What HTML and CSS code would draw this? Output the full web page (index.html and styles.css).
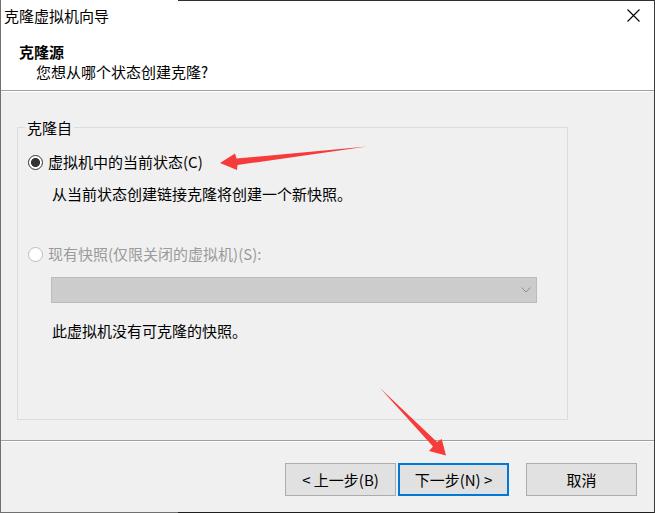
FILE: index.html
```html
<!DOCTYPE html>
<html lang="zh-CN">
<head>
<meta charset="utf-8">
<title>克隆虚拟机向导</title>
<link rel="stylesheet" href="styles.css">
</head>
<body>
<div class="window">
  <div class="titlebar">
    <span class="title">克隆虚拟机向导</span>
    <svg class="close" width="13" height="13" viewBox="0 0 13 13" aria-hidden="true">
      <path d="M0.5 0.5 L12.5 12.5 M12.5 0.5 L0.5 12.5" stroke="#000" stroke-width="1.1" fill="none"/>
    </svg>
  </div>
  <div class="header">
    <div class="h-title">克隆源</div>
    <div class="h-sub">您想从哪个状态创建克隆?</div>
  </div>
  <div class="content">
    <fieldset class="group">
      <legend>克隆自</legend>
      <div class="radio-row">
        <span class="radio checked"></span>
        <span>虚拟机中的当前状态(C)</span>
      </div>
      <div class="desc">从当前状态创建链接克隆将创建一个新快照。</div>
      <div class="radio-row disabled">
        <span class="radio"></span>
        <span>现有快照(仅限关闭的虚拟机)(S):</span>
      </div>
      <div class="select">
        <svg width="10" height="6" viewBox="0 0 10 6" aria-hidden="true">
          <path d="M0.5 0.5 L5 5 L9.5 0.5" stroke="#8a8a8a" stroke-width="1" fill="none"/>
        </svg>
      </div>
      <div class="note">此虚拟机没有可克隆的快照。</div>
    </fieldset>
  </div>
  <div class="footer">
    <button class="btn">&lt; 上一步(B)</button>
    <button class="btn default">下一步(N) &gt;</button>
    <button class="btn cancel">取消</button>
  </div>
  <svg class="annot" width="655" height="513" viewBox="0 0 655 513" aria-hidden="true">
    <polygon points="220,163 235,153.5 236.5,158.5 367,146.5 237.5,165 237,170" fill="#f73a3a"/>
    <polygon points="380,388 437,442 441.7,439 446,455.5 429,451 433,446.5" fill="#f73a3a"/>
  </svg>
</div>
</body>
</html>
```

FILE: styles.css
```css
html, body {
  margin: 0;
  padding: 0;
  background: #f0f0f0;
}

body {
  font-family: "Noto Sans CJK SC", "Microsoft YaHei", sans-serif;
  font-size: 15px;
  color: #000;
}

.window {
  position: relative;
  width: 655px;
  height: 513px;
  box-sizing: border-box;
  border-left: 1px solid #707070;
  border-right: 1px solid #3a3a3a;
  padding: 1px 0;
  display: flex;
  flex-direction: column;
  background:
    linear-gradient(to right, #ffffff 0 177px, #2e2e2e 177px) top left / 100% 1px no-repeat,
    linear-gradient(to right, #707070 0 177px, #1e1e1e 177px) bottom left / 100% 1px no-repeat,
    #f0f0f0;
  overflow: hidden;
}

.titlebar {
  height: 29px;
  flex: none;
  background: #fff;
  display: flex;
  align-items: center;
  justify-content: space-between;
  padding-left: 3px;
  padding-right: 14px;
  line-height: 20px;
}

.close {
  display: block;
}

.header {
  height: 60px;
  flex: none;
  background: #fff;
  border-bottom: 1px solid #a0a0a0;
  padding: 12px 0 0 18px;
  box-sizing: border-box;
  height: 61px;
  line-height: 20px;
}

.h-title {
  font-weight: bold;
}

.h-sub {
  padding-left: 17px;
}

.content {
  height: 349px;
  flex: none;
  box-sizing: border-box;
  border-top: 1px solid #fff;
  background: #f0f0f0;
}

.group {
  box-sizing: border-box;
  margin: 25px 0 0 16px;
  width: 551px;
  height: 303px;
  padding: 14px 0 0 10px;
  border: 1px solid #dcdcdc;
  min-width: 0;
}

.group legend {
  margin-left: -3px;
  padding: 0 2px;
  line-height: 21px;
}

.radio-row {
  display: flex;
  align-items: center;
  gap: 5px;
  height: 20px;
  line-height: 20px;
}

.radio {
  width: 15px;
  height: 15px;
  box-sizing: border-box;
  border-radius: 50%;
  border: 1px solid #bcbcbc;
  background: #fff;
  flex: none;
}

.radio.checked {
  border-color: #333;
  background: radial-gradient(circle, #333 0 4.2px, #fff 4.8px);
}

.radio-row.disabled {
  margin-top: 40px;
  color: #9a9a9a;
}

.desc,
.note {
  padding-left: 24px;
  line-height: 20px;
}

.desc {
  margin-top: 12px;
}

.select {
  margin: 13px 0 0 23px;
  width: 486px;
  height: 26px;
  box-sizing: border-box;
  background: #cccccc;
  border: 1px solid #bcbcbc;
  display: flex;
  align-items: center;
  justify-content: flex-end;
  padding-right: 5px;
}

.select svg {
  display: block;
}

.note {
  margin-top: 18px;
}

.footer {
  flex: 1;
  box-sizing: border-box;
  border-top: 1px solid #a0a0a0;
  box-shadow: inset 0 1px 0 #fff;
  display: flex;
  justify-content: flex-end;
  align-items: flex-start;
  padding: 22px 17px 0 0;
  gap: 2px;
}

.btn {
  width: 111px;
  height: 33px;
  box-sizing: border-box;
  background: #e1e1e1;
  border: 1px solid #adadad;
  font-family: inherit;
  font-size: 15px;
  color: #000;
  padding: 0;
  line-height: 20px;
}

.btn.default {
  border: 2px solid #0078d7;
}

.btn.cancel {
  margin-left: 15px;
}

.annot {
  position: absolute;
  top: 0;
  left: -1px;
  pointer-events: none;
}
```
